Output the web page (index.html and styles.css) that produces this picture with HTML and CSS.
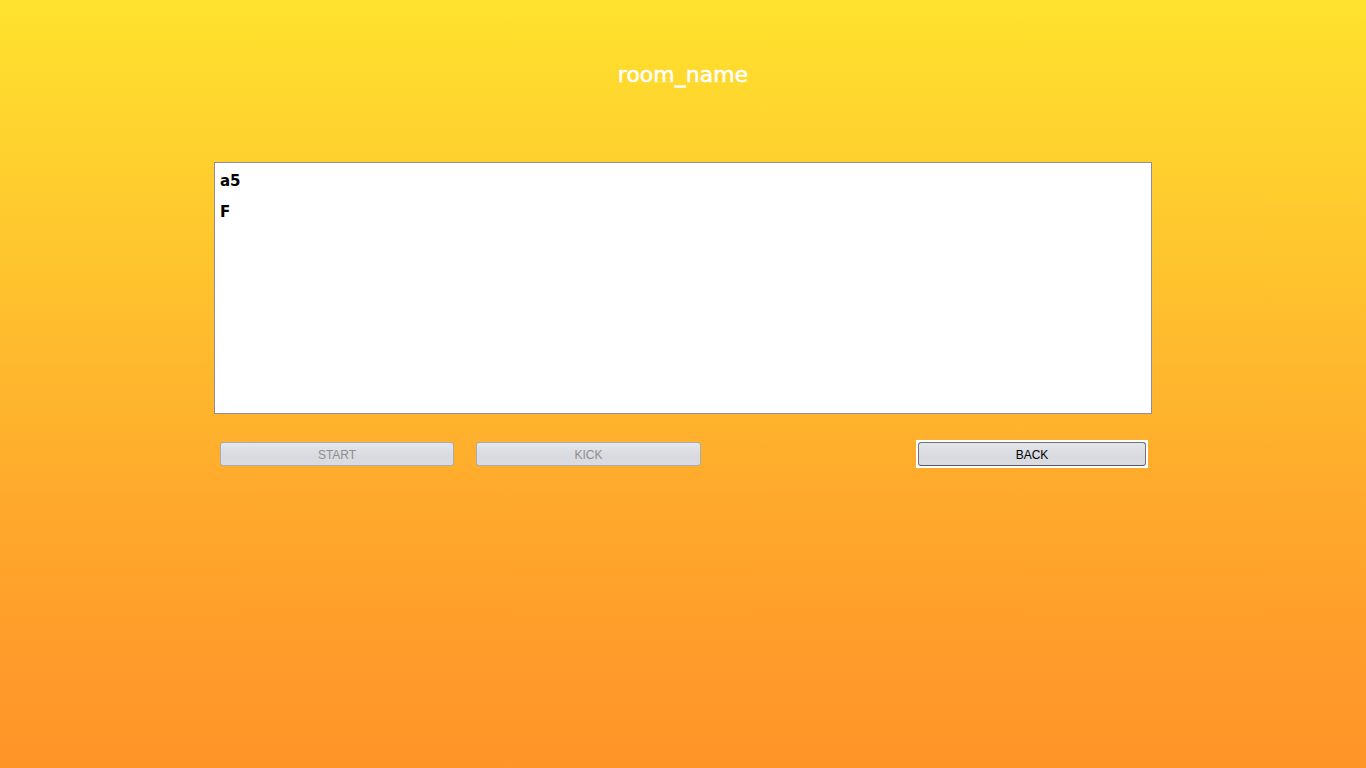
FILE: index.html
```html
<!DOCTYPE html>
<html>
<head>
<meta charset="utf-8">
<link rel="stylesheet" href="styles.css">
</head>
<body>
<div class="screen">
  <h1 class="title">room_name</h1>
  <div class="list">
    <div class="item">a5</div>
    <div class="item">F</div>
  </div>
  <div class="actions">
    <button class="btn disabled start">START</button>
    <button class="btn disabled kick">KICK</button>
    <div class="spacer"></div>
    <div class="focus">
      <button class="btn active">BACK</button>
    </div>
  </div>
</div>
</body>
</html>
```
FILE: styles.css
```css
html, body {
  margin: 0;
  padding: 0;
}
body {
  width: 1366px;
  height: 768px;
  overflow: hidden;
  background: linear-gradient(to bottom, #ffe22e 0%, #ffc42e 35%, #ffa92c 65%, #ff9328 100%);
  font-family: "DejaVu Sans", Verdana, sans-serif;
}
.screen {
  display: flex;
  flex-direction: column;
  padding-top: 62px;
}
.title {
  margin: 0;
  height: 26px;
  line-height: 26px;
  text-align: center;
  color: #ffffff;
  font-size: 22px;
  font-weight: normal;
  -webkit-text-stroke: 0.5px #ffffff;
}
.list {
  margin: 74px 0 0 214px;
  background: #ffffff;
  border: 1px solid #8c8e9c;
  padding: 9px 0 0 5px;
  box-sizing: content-box;
  display: flex;
  flex-direction: column;
  gap: 13px;
  height: 241px;
  width: 931px;
}
.item {
  font-size: 15px;
  line-height: 18px;
  font-weight: bold;
  color: #000000;
}
.actions {
  display: flex;
  align-items: center;
  margin: 26px 0 0 220px;
  width: 928px;
  height: 28px;
}
.btn {
  height: 24px;
  box-sizing: border-box;
  border-radius: 3px;
  font-family: "Liberation Sans", Arial, sans-serif;
  font-size: 12px;
  padding: 2px 0 0 0;
  background: linear-gradient(to bottom, #e4e6ea 0%, #d8dadf 60%, #dadce2 100%);
}
.disabled {
  border: 1px solid #a6acb8;
  color: #8e8e8e;
}
.start { width: 234px; }
.kick { width: 225px; margin-left: 22px; }
.spacer { flex: 1; }
.focus {
  width: 232px;
  height: 28px;
  background: #ffffff;
  display: flex;
  align-items: center;
  justify-content: center;
}
.active {
  width: 228px;
  border: 1px solid #6f737c;
  border-bottom-color: #55585f;
  color: #000000;
}
```
